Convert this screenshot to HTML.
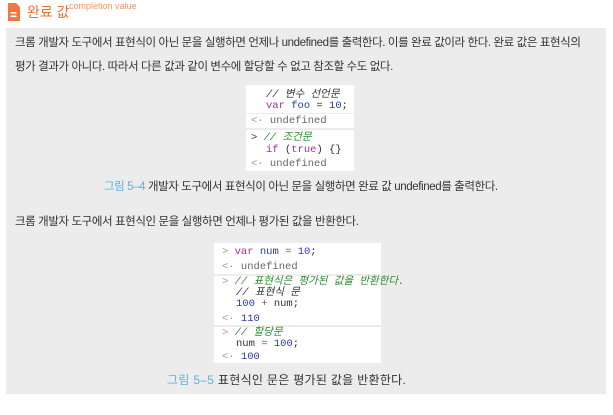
<!DOCTYPE html>
<html><head><meta charset="utf-8"><style>
*{margin:0;padding:0;box-sizing:border-box}
body{width:613px;height:415px;background:#fff;position:relative;overflow:hidden;font-family:"Liberation Sans","Noto Sans CJK KR",sans-serif;}
.a{position:absolute;white-space:nowrap}
.box{position:absolute;left:6px;top:28px;width:600px;height:366px;background:#ececec}
.p{font-size:11.5px;color:#333;letter-spacing:-0.4px;line-height:16px}
.cap{font-size:11.5px;color:#333;letter-spacing:-0.4px;line-height:16px}
.cap b{color:#5ab4e0;font-weight:normal}
.code{position:absolute;background:#fff}
.code .a{font-family:"Liberation Mono","Noto Sans CJK KR",monospace;font-size:10.5px;color:#333;line-height:11px}
.hr{position:absolute;left:0;right:0;height:2px;background:#ececec}
.c{color:#2a8a2a;font-style:italic}
.k{color:#a0309a}
.v{color:#1f3fa0}
.n{color:#2a3aa8}
.o{color:#b04a20}
.g{color:#999}
.u{color:#666 !important}
</style></head><body>
<svg class="a" style="left:7px;top:3px" width="13" height="19" viewBox="0 0 13 19"><path d="M1 0H9L13 4V18H1Z" fill="#f07840"/><rect x="3.5" y="9" width="6" height="1.6" fill="#fff"/><rect x="3.5" y="12.5" width="6" height="1.6" fill="#fff"/></svg>
<div class="a" style="left:27px;top:3px;font-size:14px;line-height:18px;color:#f0703a">완료 값</div>
<div class="a" style="left:69px;top:1px;font-size:9px;color:#f4956a">completion value</div>
<div class="box"></div>
<div class="a p" style="left:15px;top:35px">크롬 개발자 도구에서 표현식이 아닌 문을 실행하면 언제나 undefined를 출력한다. 이를 완료 값이라 한다. 완료 값은 표현식의</div>
<div class="a p" style="left:15px;top:59px">평가 결과가 아니다. 따라서 다른 값과 같이 변수에 할당할 수 없고 참조할 수도 없다.</div>

<div class="code" style="left:246px;top:85px;width:108px;height:86px">
<div class="a c" style="left:20px;top:5px">// 변수 선언문</div>
<div class="a" style="left:20px;top:16px"><span class="k">var</span> <span class="v">foo</span> = <span class="n">10</span>;</div>
<div class="hr" style="top:28px;height:1px"></div>
<div class="a u" style="left:5px;top:31px"><span class="g">&lt;·</span> undefined</div>
<div class="hr" style="top:43px"></div>
<div class="a" style="left:5px;top:48px">&gt; <span class="c">// 조건문</span></div>
<div class="a" style="left:20px;top:60px"><span class="k">if</span> (<span class="k">true</span>) {}</div>
<div class="a u" style="left:5px;top:74px"><span class="g">&lt;·</span> undefined</div>
</div>
<div class="a cap" style="left:104px;top:179px"><b>그림 5–4</b> 개발자 도구에서 표현식이 아닌 문을 실행하면 완료 값 undefined를 출력한다.</div>
<div class="a p" style="left:15px;top:214px">크롬 개발자 도구에서 표현식인 문을 실행하면 언제나 평가된 값을 반환한다.</div>

<div class="code" style="left:214px;top:243px;width:167px;height:120px">
<div class="a" style="left:8px;top:4px"><span class="g">&gt;</span> <span class="k">var</span> <span class="v">num</span> <span class="o">=</span> <span class="n">10</span>;</div>
<div class="a u" style="left:8px;top:19px"><span class="g">&lt;·</span> undefined</div>
<div class="hr" style="top:31px"></div>
<div class="a" style="left:8px;top:34px"><span class="g">&gt;</span> <span class="c">// 표현식은 평가된 값을 반환한다.</span></div>
<div class="a c" style="left:22px;top:45px">// 표현식 문</div>
<div class="a" style="left:22px;top:56px"><span class="n">100</span> <span class="o">+</span> num;</div>
<div class="a" style="left:8px;top:71px"><span class="g">&lt;·</span> <span class="n">110</span></div>
<div class="hr" style="top:82px"></div>
<div class="a" style="left:8px;top:85px"><span class="g">&gt;</span> <span class="c">// 할당문</span></div>
<div class="a" style="left:22px;top:96px">num <span class="o">=</span> <span class="n">100</span>;</div>
<div class="a" style="left:8px;top:109px"><span class="g">&lt;·</span> <span class="n">100</span></div>
</div>
<div class="a cap" style="left:167px;top:372px;font-size:12px;letter-spacing:0.3px"><b>그림 5–5</b> 표현식인 문은 평가된 값을 반환한다.</div>
</body></html>
